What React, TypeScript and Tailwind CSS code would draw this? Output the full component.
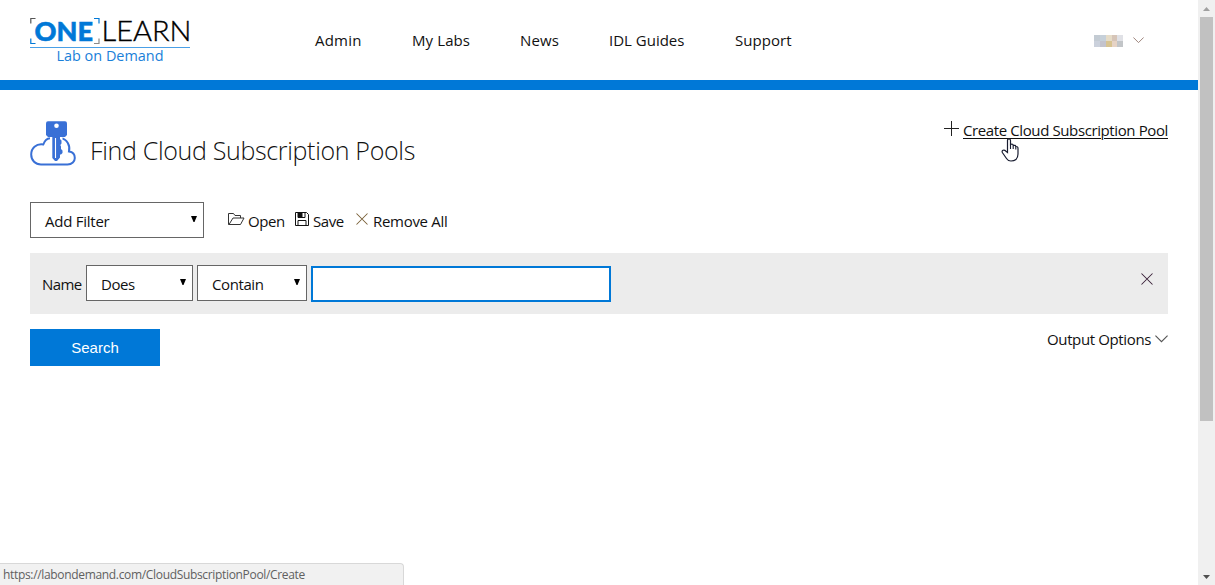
import React from "react";

function Logo() {
  return (
    <svg width="162" height="52" viewBox="0 0 162 52" className="shrink-0 overflow-visible" aria-label="ONE LEARN Lab on Demand">
      <path d="M.8 6.500V1.500H5.500" fill="none" stroke="#555" strokeWidth="1.200" />
      <path d="M.8 21.500V26.500H5.500" fill="none" stroke="#0078d7" strokeWidth="1.200" />
      <path d="M64 1.500H69V6.500" fill="none" stroke="#0078d7" strokeWidth="1.200" />
      <path d="M64 26.500H69V21.500" fill="none" stroke="#888" strokeWidth="1.200" />
      <text x="4.500" y="23.600" textLength="58.500" lengthAdjust="spacingAndGlyphs" fontFamily="Lato, sans-serif" fontWeight="900" fontSize="26.500" fill="#0078d7" stroke="#0078d7" strokeWidth=".5">ONE</text>
      <text x="71.500" y="23.600" textLength="90" lengthAdjust="spacingAndGlyphs" fontFamily="Lato, sans-serif" fontWeight="300" fontSize="26.500" fill="#000" stroke="#000" strokeWidth=".35">LEARN</text>
      <rect x="0" y="30" width="160" height="1" fill="#4a9fe6" />
      <text x="26.500" y="44" textLength="107" lengthAdjust="spacingAndGlyphs" fontFamily="'Open Sans', sans-serif" fontWeight="400" fontSize="14.500" fill="#1a80d9">Lab on Demand</text>
    </svg>
  );
}

function CloudKeyIcon() {
  return (
    <svg width="46" height="46" viewBox="0 0 46 46" className="shrink-0">
      <path d="M20 17.200C16 17.500 14.500 20 13.300 23.500C6 22.500 1.200 27 1.200 33.500C1.200 39.500 5.500 43.500 11 43.500H37.500C42 43.500 44.800 40.500 44.800 37C44.800 33.500 42.500 31 39 30.500C40.500 24.500 37 18 31 17.200" fill="none" stroke="#3970d6" strokeWidth="2" />
      <path d="M20.500 16V38L26 41L32.500 37V16Z" fill="#fff" />
      <path d="M18 .3H35Q37 .3 37 2.500V14L35 16H18L16 14V2.500Q16 .3 18 .3Z" fill="#3970d6" />
      <circle cx="26.500" cy="4.800" r="2.300" fill="#fff" />
      <path d="M22.300 15H30V18L31.500 19.500V22.500L30.300 24L31 25.500V28L32.500 29.500V32L31 33.500H30V36.500L27 40H25L22.300 37Z" fill="#3970d6" />
      <path d="M25.500 17V37" stroke="#fff" strokeWidth="1.100" />
    </svg>
  );
}

function Cross({ size, color }: { size: number; color: string }) {
  return (
    <svg width={size} height={size} viewBox="0 0 12 12" className="shrink-0">
      <path d="M.5 .5L11.500 11.500M11.500 .5L.5 11.500" stroke={color} strokeWidth="1.050" />
    </svg>
  );
}

function Chevron({ width, color }: { width: number; color: string }) {
  return (
    <svg width={width} height={(width * 7) / 12} viewBox="0 0 12 7" className="shrink-0">
      <path d="M.4 .5L6 6.100L11.600 .5" fill="none" stroke={color} strokeWidth="1.050" />
    </svg>
  );
}

function SelectBox({ label, className }: { label: string; className: string }) {
  return (
    <div className={"flex h-9 shrink-0 items-center justify-between border border-[#666] bg-white pl-3.5 " + className}>
      <span className="relative top-px">{label}</span>
      <svg width="6" height="6" viewBox="0 0 6 6" className="mr-1.5 mb-0.5">
        <path d="M0 0H6L3.500 6H2.500Z" fill="#000" />
      </svg>
    </div>
  );
}

const nav = [
  { label: "Admin", className: "w-[47px] tracking-[0.2px]" },
  { label: "My Labs", className: "w-[58px] tracking-[0.1px]" },
  { label: "News", className: "w-[39px] tracking-[0.1px]" },
  { label: "IDL Guides", className: "w-[76px]" },
  { label: "Support", className: "w-[57px] tracking-[0.05px]" },
];

const avatar = [
  "bg-[#c3cbd3]", "bg-[#c6d0d9]", "bg-[#e6dcc8]", "bg-[#d6c5b8]", "bg-[#e0e1e6]",
  "bg-[#cbd1dc]", "bg-[#c3c3cd]", "bg-[#d7c391]", "bg-[#e6d3c5]", "bg-[#c2c5c8]",
];

export default function App() {
  return (
    <div className="relative flex h-[585px] w-[1215px] overflow-hidden bg-white font-['Open_Sans','Noto_Sans',sans-serif] text-[15px] leading-5 font-normal whitespace-nowrap text-[#111]">
      <div className="flex w-[1198px] flex-col">
        <header className="flex h-20 shrink-0 items-start pt-[17px] pl-[30px]">
          <Logo />
          <nav className="mt-[13px] ml-[123px] flex gap-[50px]">
            {nav.map((n) => (
              <a key={n.label} className={n.className}>{n.label}</a>
            ))}
          </nav>
          <div className="mt-[18px] ml-[302px] grid grid-cols-[6px_6px_6px_5px_6px]">
            {avatar.map((c, i) => (
              <span key={i} className={"h-1.5 " + c} />
            ))}
          </div>
          <div className="mt-5 ml-2.5">
            <Chevron width={11} color="#9a8078" />
          </div>
        </header>
        <div className="h-2.5 shrink-0 bg-[#0078d7]" />

        <main className="flex flex-col px-[30px]">
          <div className="flex h-28 items-start justify-between pt-[31px]">
            <div className="flex">
              <CloudKeyIcon />
              <h1 className="mt-[11px] ml-3.5 text-[25px] leading-9 font-light tracking-[-0.33px]">Find Cloud Subscription Pools</h1>
            </div>
            <a className="-mt-px flex cursor-pointer items-start">
              <svg width="15" height="15" viewBox="0 0 15 15" className="mt-px mr-1">
                <path d="M0 7.500H15M7.500 0V15" stroke="#222" />
              </svg>
              <span className="w-[205px] tracking-[-0.39px] underline decoration-1 underline-offset-2">Create Cloud Subscription Pool</span>
            </a>
          </div>

          <div className="flex h-9 items-center">
            <SelectBox label="Add Filter" className="w-[174px] tracking-[-0.25px]" />
            <div className="ml-[23px] flex w-[68px] items-center">
              <svg width="18" height="14" viewBox="0 0 18 14" className="mr-[3px] mb-0.5" fill="none" stroke="#333">
                <path d="M1.500 12.500V1.500H6.500L8 3.500H13.500V6M1.500 12.500H13.500L17 6H6L2 12.500" />
              </svg>
              <span className="relative top-px tracking-[-0.4px]">Open</span>
            </div>
            <div className="flex w-[61px] items-center">
              <svg width="14" height="14" viewBox="0 0 14 14" className="mr-1 mb-0.5" fill="none" stroke="#111">
                <path d="M.5 .5H11.500L13.500 2.500V13.500H.5ZM3 13.500V8.500H11V13.500M3 .5V5.500H10V.5" />
                <path d="M3 1H7.500V5H3Z" fill="#111" stroke="none" />
              </svg>
              <span className="relative top-px tracking-[-0.4px]">Save</span>
            </div>
            <div className="flex items-center">
              <div className="mr-[5px] mb-0.5"><Cross size={12} color="#7a6038" /></div>
              <span className="relative top-px tracking-[-0.3px]">Remove All</span>
            </div>
          </div>

          <div className="mt-[15px] flex h-[61px] items-start bg-[#ececec] pt-3 pr-[15px] pl-3">
            <span className="mt-[9px] w-11 tracking-[-0.6px]">Name</span>
            <SelectBox label="Does" className="w-[107px] tracking-[-0.45px]" />
            <SelectBox label="Contain" className="ml-1 w-[110px] tracking-[-0.4px]" />
            <input className="mt-px ml-1 h-9 w-[300px] border-2 border-[#0078d7] bg-white px-2 outline-none" />
            <div className="mt-2 ml-auto"><Cross size={12} color="#3a2038" /></div>
          </div>

          <div className="mt-[15px] flex items-start justify-between">
            <button className="h-[37px] w-[130px] bg-[#0078d7] font-['Liberation_Sans',Arial,sans-serif] text-[15px] font-normal text-white">Search</button>
            <div className="flex items-center">
              <span className="w-[108px] tracking-[-0.37px]">Output Options</span>
              <Chevron width={13} color="#555" />
            </div>
          </div>
        </main>
      </div>

      <div className="flex w-[17px] shrink-0 flex-col items-center bg-[#f0f0f0]">
        <div className="flex h-[17px] items-center">
          <svg width="7" height="4" viewBox="0 0 7 4"><path d="M0 4L3.500 0L7 4Z" fill="#a0a0a0" /></svg>
        </div>
        <div className="h-[404px] w-[13px] bg-[#c1c1c1]" />
        <div className="mt-auto flex h-[17px] items-center">
          <svg width="7" height="4" viewBox="0 0 7 4"><path d="M0 0L3.500 4L7 0Z" fill="#505050" /></svg>
        </div>
      </div>

      <svg width="18" height="24" viewBox="0 0 18 24" className="absolute top-[138px] left-[1001px]">
        <path d="M6.500 14.500V2.500Q6.500 .8 8 .8Q9.500 .8 9.500 2.500V6.500Q12 5.500 12.300 7.500Q14.500 6.800 14.800 8.500Q17 8.300 17 10.500V16Q17 19 15 21.500Q13 23 10 23Q7 23 5.500 20.500L1.500 14.800Q.5 13 2 12.300Q3.500 11.800 5 13.200Z" fill="#fff" stroke="#181c30" strokeWidth="1.200" />
        <path d="M9.500 6.500V11M12.200 7.500V11M14.800 8.500V11.500" stroke="#181c30" strokeWidth="1.100" />
      </svg>

      <div className="absolute bottom-0 left-0 h-[22px] w-[404px] rounded-tr border-t border-r border-[#d8d8d8] bg-[#f1f1f1] pl-[3px] text-[12px] leading-[22px] tracking-[-0.33px] text-[#606060]">
        https://labondemand.com/CloudSubscriptionPool/Create
      </div>
    </div>
  );
}
